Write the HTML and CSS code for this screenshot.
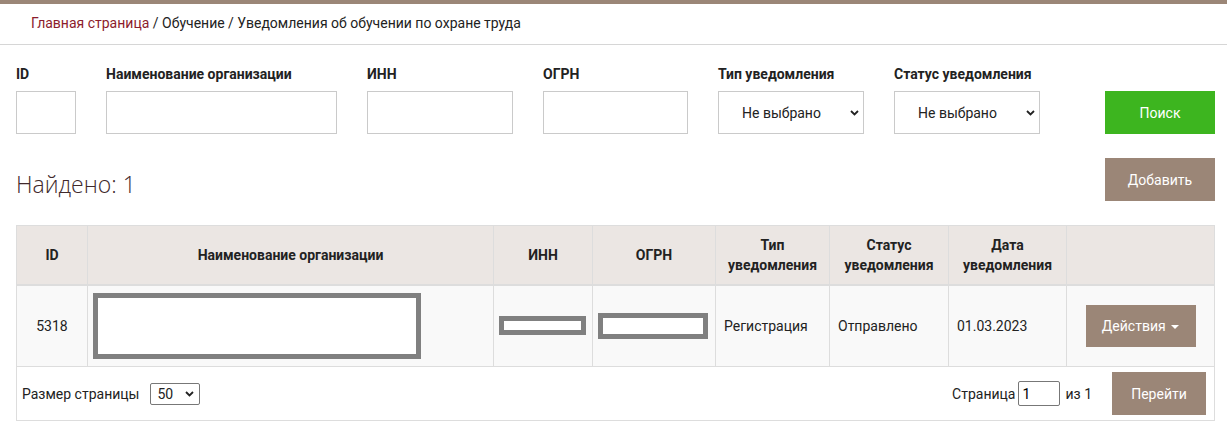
FILE: index.html
```html
<html>

<head>
	<title>Уведомления об обучении по охране труда</title>
	<link rel="stylesheet" href="styles.css">
</head>

<body>
	<div class="breadcrumbs">
		<a href="#" class="crumb-home">Главная страница</a> / Обучение / Уведомления об обучении по охране труда
	</div>

	<div class="content">
		<form class="filters">
			<div class="field field-id">
				<label>ID</label>
				<input type="text" />
			</div>
			<div class="field field-name">
				<label>Наименование организации</label>
				<input type="text" />
			</div>
			<div class="field field-inn">
				<label>ИНН</label>
				<input type="text" />
			</div>
			<div class="field field-ogrn">
				<label>ОГРН</label>
				<input type="text" />
			</div>
			<div class="field field-type">
				<label>Тип уведомления</label>
				<div class="select">
					<span>Не выбрано</span>
					<svg width="9" height="6" viewBox="0 0 9 6"><path d="M1 1l3.5 3.5L8 1" fill="none" stroke="#222" stroke-width="1.8" /></svg>
				</div>
			</div>
			<div class="field field-status">
				<label>Статус уведомления</label>
				<div class="select">
					<span>Не выбрано</span>
					<svg width="9" height="6" viewBox="0 0 9 6"><path d="M1 1l3.5 3.5L8 1" fill="none" stroke="#222" stroke-width="1.8" /></svg>
				</div>
			</div>
			<div class="field field-search">
				<button type="button" class="btn btn-green">Поиск</button>
			</div>
		</form>

		<div class="found-row">
			<div class="found">Найдено: 1</div>
			<button type="button" class="btn btn-brown btn-add">Добавить</button>
		</div>

		<div class="grid">
			<table>
				<thead>
					<tr>
						<th class="col-id">ID</th>
						<th class="col-name">Наименование организации</th>
						<th class="col-inn">ИНН</th>
						<th class="col-ogrn">ОГРН</th>
						<th class="col-type">Тип<br>уведомления</th>
						<th class="col-status">Статус<br>уведомления</th>
						<th class="col-date">Дата<br>уведомления</th>
						<th class="col-actions"></th>
					</tr>
				</thead>
				<tbody>
					<tr>
						<td class="center">5318</td>
						<td class="cell-name"><div class="redact redact-name"></div></td>
						<td class="cell-inn"><div class="redact redact-inn"></div></td>
						<td class="cell-ogrn"><div class="redact redact-ogrn"></div></td>
						<td>Регистрация</td>
						<td>Отправлено</td>
						<td>01.03.2023</td>
						<td class="center">
							<button type="button" class="btn btn-brown btn-actions">Действия <span class="caret"></span></button>
						</td>
					</tr>
				</tbody>
			</table>

			<div class="pager">
				<div class="page-size">
					Размер страницы
					<div class="small-select">
						<span>50</span>
						<svg width="9" height="6" viewBox="0 0 9 6"><path d="M1 1l3.5 3.5L8 1" fill="none" stroke="#222" stroke-width="1.8" /></svg>
					</div>
				</div>
				<div class="page-nav">
					Страница <input type="text" class="page-input" value="1" /> из 1
					<button type="button" class="btn btn-brown btn-go">Перейти</button>
				</div>
			</div>
		</div>
	</div>
</body>

</html>
```

FILE: styles.css
```css
html,
body {
	margin: 0px;
	padding: 0px;
	width: 100%;
}

body {
	border-top: 4px solid #9b8677;
	font-family: Roboto, "Liberation Sans", sans-serif;
	font-size: 14px;
	color: #222;
	background-color: #fff;
}

.breadcrumbs {
	height: 41px;
	line-height: 39px;
	padding-left: 31px;
	border-bottom: 1px solid #d6d6d6;
	box-sizing: border-box;
	font-size: 14px;
	color: #222;
}

.crumb-home {
	color: #8c1c2c;
	text-decoration: none;
}

.content {
	padding: 0px 12px 0px 16px;
}

.filters {
	display: flex;
	align-items: flex-end;
	margin: 0px;
	padding-top: 21px;
}

.field {
	display: flex;
	flex-direction: column;
	margin-right: 30px;
}

.field label {
	display: block;
	height: 25px;
	font-weight: bold;
	font-size: 14px;
	color: #222;
}

.field input {
	height: 43px;
	border: 1px solid #cacaca;
	box-sizing: border-box;
	font-family: inherit;
	font-size: 14px;
	outline: none;
}

.field-id input {
	width: 60px;
}

.field-name input {
	width: 231px;
}

.field-inn input {
	width: 146px;
}

.field-ogrn input {
	width: 145px;
}

.select {
	display: flex;
	align-items: center;
	justify-content: space-between;
	width: 146px;
	height: 43px;
	padding: 0px 4px 0px 23px;
	border: 1px solid #cacaca;
	box-sizing: border-box;
	font-size: 14px;
	color: #222;
}

.field-search {
	margin-left: 35px;
	margin-right: 0px;
}

.btn {
	border: none;
	font-family: inherit;
	font-size: 14px;
	color: #fff;
	cursor: pointer;
}

.btn-green {
	width: 110px;
	height: 43px;
	background-color: #3db51f;
}

.btn-brown {
	background-color: #9b8677;
}

.found-row {
	display: flex;
	justify-content: space-between;
	align-items: flex-start;
	padding-top: 24px;
	height: 67px;
}

.found {
	padding-top: 10px;
	font-family: "Open Sans", "Noto Sans", sans-serif;
	font-weight: 300;
	font-size: 23px;
	color: #40292b;
}

.btn-add {
	width: 110px;
	height: 43px;
}

.grid {
	width: 1199px;
}

table {
	width: 100%;
	border-collapse: collapse;
	border: 1px solid #ddd;
}

th {
	height: 59px;
	padding: 0px 8px;
	background-color: #ebe6e3;
	border: 1px solid #ddd;
	border-bottom-width: 2px;
	font-weight: bold;
	font-size: 14px;
	color: #222;
	text-align: center;
	line-height: 20px;
}

td {
	height: 82px;
	padding: 0px 8px;
	background-color: #f9f9f9;
	border: 1px solid #ddd;
	font-size: 14px;
	color: #222;
}

td.center {
	text-align: center;
}

.col-id {
	width: 54px;
}

.col-name {
	width: 389px;
}

.col-inn {
	width: 82px;
}

.col-ogrn {
	width: 106px;
}

.col-type {
	width: 97px;
}

.col-status {
	width: 102px;
}

.col-date {
	width: 101px;
}

.cell-name,
.cell-inn,
.cell-ogrn {
	padding: 0px 5px;
}

.redact {
	border: 5px solid #808080;
	background-color: #fff;
	box-sizing: border-box;
}

.redact-name {
	width: 328px;
	height: 66px;
}

.redact-inn {
	width: 87px;
	height: 19px;
}

.redact-ogrn {
	width: 110px;
	height: 26px;
}

.btn-actions {
	width: 110px;
	height: 42px;
}

.caret {
	display: inline-block;
	width: 0px;
	height: 0px;
	margin-left: 2px;
	vertical-align: middle;
	border-top: 4px solid #fff;
	border-left: 4px solid transparent;
	border-right: 4px solid transparent;
}

.pager {
	display: flex;
	justify-content: space-between;
	align-items: center;
	height: 54px;
	padding: 0px 8px 0px 5px;
	border: 1px solid #ddd;
	border-top: none;
	box-sizing: border-box;
}

.page-size {
	display: flex;
	align-items: center;
	font-size: 14px;
	color: #222;
}

.small-select {
	display: flex;
	align-items: center;
	justify-content: space-between;
	width: 50px;
	height: 22px;
	margin-left: 11px;
	padding: 0px 5px 0px 6px;
	border: 1px solid #777;
	border-radius: 2px;
	box-sizing: border-box;
}

.page-nav {
	display: flex;
	align-items: center;
	font-size: 14px;
	color: #222;
}

.page-input {
	width: 42px;
	height: 25px;
	margin: 0px 5px 0px 3px;
	border: 1px solid #777;
	border-radius: 2px;
	box-sizing: border-box;
	font-family: inherit;
	font-size: 14px;
	padding: 0px 3px;
}

.btn-go {
	width: 94px;
	height: 43px;
	margin-left: 20px;
}
```
